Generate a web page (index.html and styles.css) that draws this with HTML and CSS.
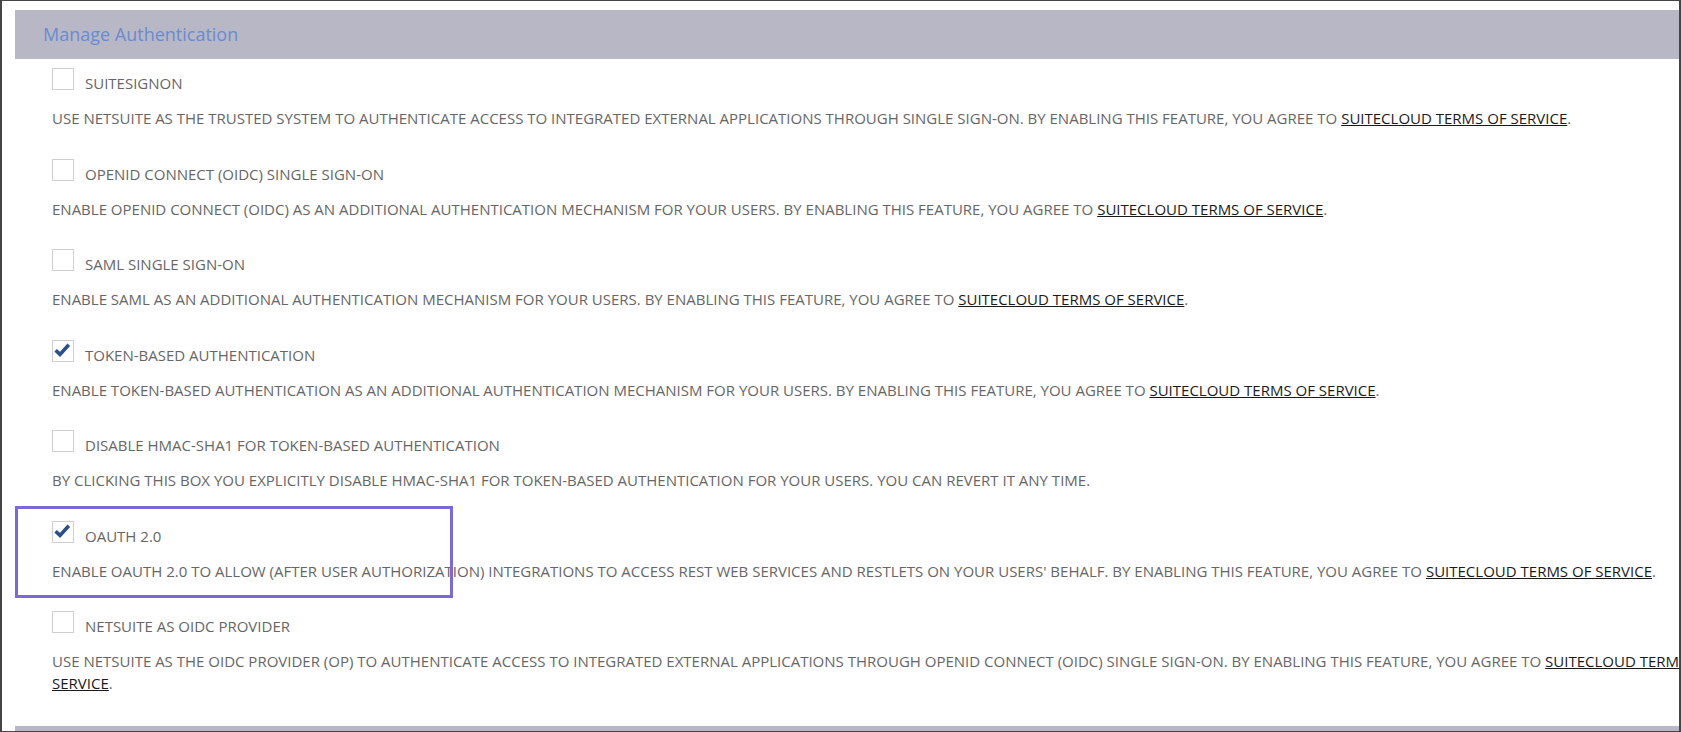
FILE: index.html
```html
<!DOCTYPE html>
<html lang="en">
<head>
<meta charset="utf-8">
<title>Manage Authentication</title>
<link rel="stylesheet" href="styles.css">
</head>
<body>
<div class="frame">
  <div class="page">
    <div class="band"><span class="band-title">Manage Authentication</span></div>
    <div class="list">
      <div class="item">
        <div class="head"><span class="box"></span><span class="label">SUITESIGNON</span></div>
        <p class="desc">USE NETSUITE AS THE TRUSTED SYSTEM TO AUTHENTICATE ACCESS TO INTEGRATED EXTERNAL APPLICATIONS THROUGH SINGLE SIGN-ON. BY ENABLING THIS FEATURE, YOU AGREE TO <a class="link" href="#">SUITECLOUD TERMS OF SERVICE</a>.</p>
      </div>
      <div class="item">
        <div class="head"><span class="box"></span><span class="label">OPENID CONNECT (OIDC) SINGLE SIGN-ON</span></div>
        <p class="desc">ENABLE OPENID CONNECT (OIDC) AS AN ADDITIONAL AUTHENTICATION MECHANISM FOR YOUR USERS. BY ENABLING THIS FEATURE, YOU AGREE TO <a class="link" href="#">SUITECLOUD TERMS OF SERVICE</a>.</p>
      </div>
      <div class="item">
        <div class="head"><span class="box"></span><span class="label">SAML SINGLE SIGN-ON</span></div>
        <p class="desc">ENABLE SAML AS AN ADDITIONAL AUTHENTICATION MECHANISM FOR YOUR USERS. BY ENABLING THIS FEATURE, YOU AGREE TO <a class="link" href="#">SUITECLOUD TERMS OF SERVICE</a>.</p>
      </div>
      <div class="item">
        <div class="head"><span class="box"><svg class="check" viewBox="0 0 20 20"><path d="M2.6 9.2 L7 13.4 L15.8 3.8" fill="none" stroke="#2b4f8e" stroke-width="3.6"/></svg></span><span class="label">TOKEN-BASED AUTHENTICATION</span></div>
        <p class="desc">ENABLE TOKEN-BASED AUTHENTICATION AS AN ADDITIONAL AUTHENTICATION MECHANISM FOR YOUR USERS. BY ENABLING THIS FEATURE, YOU AGREE TO <a class="link" href="#">SUITECLOUD TERMS OF SERVICE</a>.</p>
      </div>
      <div class="item">
        <div class="head"><span class="box"></span><span class="label">DISABLE HMAC-SHA1 FOR TOKEN-BASED AUTHENTICATION</span></div>
        <p class="desc">BY CLICKING THIS BOX YOU EXPLICITLY DISABLE HMAC-SHA1 FOR TOKEN-BASED AUTHENTICATION FOR YOUR USERS. YOU CAN REVERT IT ANY TIME.</p>
      </div>
      <div class="item">
        <div class="head"><span class="box"><svg class="check" viewBox="0 0 20 20"><path d="M2.6 9.2 L7 13.4 L15.8 3.8" fill="none" stroke="#2b4f8e" stroke-width="3.6"/></svg></span><span class="label">OAUTH 2.0</span></div>
        <p class="desc">ENABLE OAUTH 2.0 TO ALLOW (AFTER USER AUTHORIZATION) INTEGRATIONS TO ACCESS REST WEB SERVICES AND RESTLETS ON YOUR USERS' BEHALF. BY ENABLING THIS FEATURE, YOU AGREE TO <a class="link" href="#">SUITECLOUD TERMS OF SERVICE</a>.</p>
      </div>
      <div class="item">
        <div class="head"><span class="box"></span><span class="label">NETSUITE AS OIDC PROVIDER</span></div>
        <p class="desc">USE NETSUITE AS THE OIDC PROVIDER (OP) TO AUTHENTICATE ACCESS TO INTEGRATED EXTERNAL APPLICATIONS THROUGH OPENID CONNECT (OIDC) SINGLE SIGN-ON. BY ENABLING THIS FEATURE, YOU AGREE TO <a class="link" href="#">SUITECLOUD TERMS OF SERVICE</a>.</p>
      </div>
    </div>
    <div class="band band-bottom"></div>
  </div>
  <div class="highlight"></div>
</div>
</body>
</html>
```

FILE: styles.css
```css
html, body {
  margin: 0;
  padding: 0;
  background: #ffffff;
}

.frame {
  position: relative;
  width: 1681px;
  height: 732px;
  box-sizing: border-box;
  border-style: solid;
  border-color: #454545;
  border-width: 1px 2px 1px 2px;
  overflow: hidden;
  font-family: "Open Sans", "Liberation Sans", sans-serif;
}

.page {
  width: 1740px;
  padding-left: 13px;
  padding-top: 9px;
  display: flex;
  flex-direction: column;
}

.band {
  height: 49px;
  background: #b8b7c5;
  padding-left: 28px;
  display: flex;
  align-items: center;
}

.band-title {
  font-size: 18px;
  line-height: 49px;
  color: #6a8bd0;
}

.band-bottom {
  height: 20px;
  margin-top: 2px;
}

.list {
  margin-left: 37px;
  padding-top: 9px;
  display: flex;
  flex-direction: column;
}

.item {
  padding-bottom: 29.5px;
}

.head {
  display: flex;
  align-items: flex-start;
}

.box {
  width: 22px;
  height: 22px;
  box-sizing: border-box;
  border: 1px solid #cfcfcf;
  background: #ffffff;
  flex: none;
  display: flex;
}

.check {
  width: 20px;
  height: 20px;
}

.label {
  margin-left: 11px;
  margin-top: 4px;
  font-size: 15px;
  line-height: 22px;
  color: #666666;
}

.desc {
  margin: 13px 0 0 0;
  font-size: 15px;
  line-height: 22px;
  color: #666666;
}

.link {
  color: #1a1a1a;
  text-decoration: underline;
}

.highlight {
  position: absolute;
  left: 13px;
  top: 505px;
  width: 438px;
  height: 92px;
  box-sizing: border-box;
  border: 3px solid #7b68d9;
}
```
